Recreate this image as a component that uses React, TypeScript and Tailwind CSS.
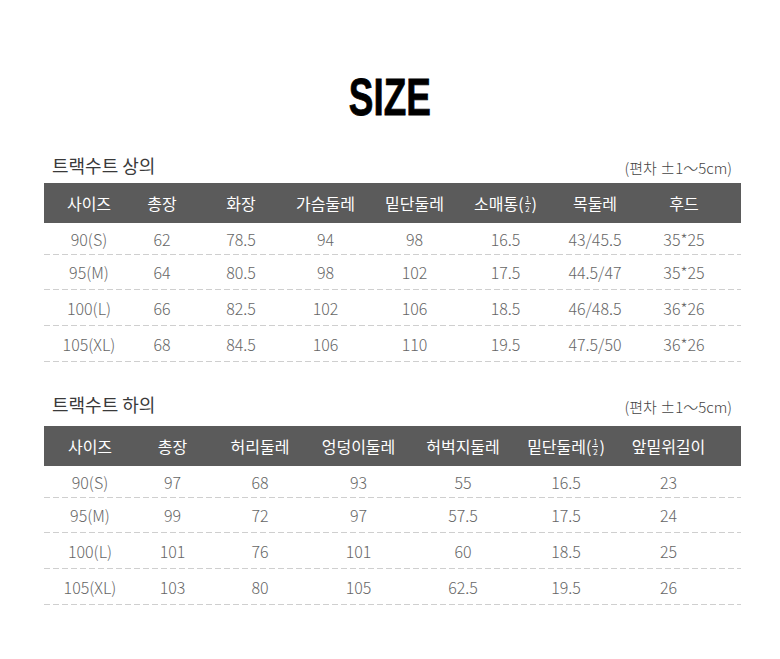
import React from "react";

type TableProps = {
  title: string;
  cols: string;
  headers: React.ReactNode[];
  rows: string[][];
  className?: string;
};

const Half = () => (
  <span className="inline-flex items-center">
    (
    <span className="mx-[1px] inline-flex flex-col items-center text-[8px] leading-[9px]">
      <span>1</span>
      <span className="h-px w-[6px] bg-white" />
      <span>2</span>
    </span>
    )
  </span>
);

const ROW_H = ["h-[31px]", "h-[34px]", "h-[35px]", "h-[35px]"];

function SizeTable({ title, cols, headers, rows, className }: TableProps) {
  return (
    <section className={className}>
      <div className="flex h-[18px] items-center justify-between pl-[8px] pr-[9px]">
        <h2 className="text-[18px] leading-none text-[#3a3a3a]">{title}</h2>
        <span className="mt-[4px] text-[15px] leading-none font-light text-[#444]">(편차 ±1～5cm)</span>
      </div>

      <div className={`grid h-[40px] items-center bg-[#5b5b5b] text-[16px] text-white ${cols}`}>
        {headers.map((h, i) => (
          <div key={i} className="flex justify-center whitespace-nowrap">
            {h}
          </div>
        ))}
      </div>

      {rows.map((r, ri) => (
        <div key={ri}>
          <div className={`grid items-center text-[16px] font-light text-[#666] ${cols} ${ROW_H[ri]}`}>
            {r.map((c, ci) => (
              <div key={ci} className="flex justify-center whitespace-nowrap">
                {c}
              </div>
            ))}
          </div>
          <div className="h-px bg-[linear-gradient(to_right,#cfcfcf_6px,transparent_6px)] bg-[length:9px_1px] bg-repeat-x" />
        </div>
      ))}
    </section>
  );
}

export default function App() {
  return (
    <div className="h-[659px] w-[780px] bg-white font-['Noto_Sans_CJK_KR',sans-serif]">
      <div className="pt-[71px] text-center">
        <span className="inline-block scale-x-[0.71] font-['Liberation_Sans',sans-serif] text-[52px] leading-[52px] font-bold text-black [-webkit-text-stroke:0.8px_#000]">
          SIZE
        </span>
      </div>

      <SizeTable
        className="ml-[44px] mt-[33px] w-[697px] [&>div:nth-child(2)]:mt-[9px]"
        title="트랙수트 상의"
        cols="pl-[10px] pr-[12px] grid-cols-[70px_76px_82px_87px_91px_91px_88px_90px]"
        headers={["사이즈", "총장", "화장", "가슴둘레", "밑단둘레", <span key="h">소매통<Half /></span>, "목둘레", "후드"]}
        rows={[
          ["90(S)", "62", "78.5", "94", "98", "16.5", "43/45.5", "35*25"],
          ["95(M)", "64", "80.5", "98", "102", "17.5", "44.5/47", "35*25"],
          ["100(L)", "66", "82.5", "102", "106", "18.5", "46/48.5", "36*26"],
          ["105(XL)", "68", "84.5", "106", "110", "19.5", "47.5/50", "36*26"],
        ]}
      />

      <SizeTable
        className="ml-[44px] mt-[33px] w-[697px] [&>div:nth-child(2)]:mt-[13px]"
        title="트랙수트 하의"
        cols="pl-[5px] pr-[21px] grid-cols-[82px_83px_92px_105px_104px_102px_103px]"
        headers={["사이즈", "총장", "허리둘레", "엉덩이둘레", "허벅지둘레", <span key="h">밑단둘레<Half /></span>, "앞밑위길이"]}
        rows={[
          ["90(S)", "97", "68", "93", "55", "16.5", "23"],
          ["95(M)", "99", "72", "97", "57.5", "17.5", "24"],
          ["100(L)", "101", "76", "101", "60", "18.5", "25"],
          ["105(XL)", "103", "80", "105", "62.5", "19.5", "26"],
        ]}
      />
    </div>
  );
}
